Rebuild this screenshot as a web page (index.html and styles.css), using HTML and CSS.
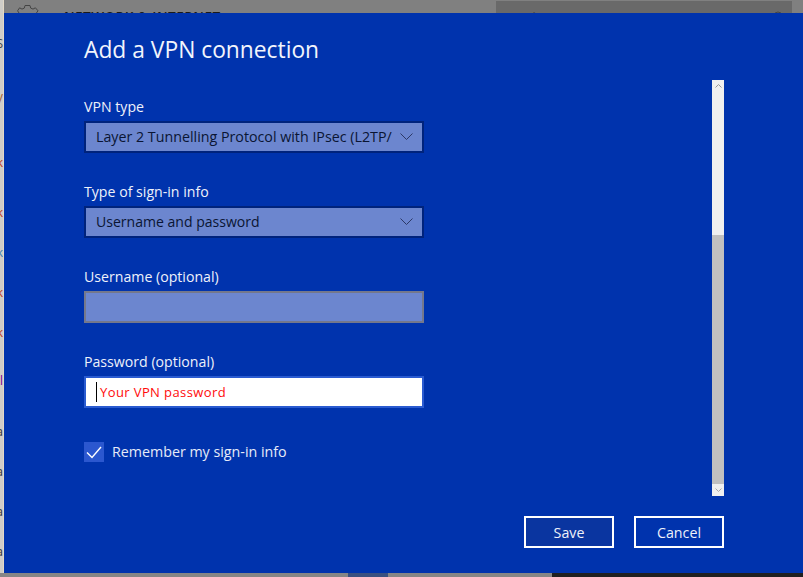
FILE: index.html
```html
<!DOCTYPE html>
<html lang="en">
<head>
<meta charset="utf-8">
<title>Add a VPN connection</title>
<link rel="stylesheet" href="styles.css">
</head>
<body>
<div class="backdrop">
  <div class="edge">
    <span class="frag frag-s">S</span>
    <span class="frag frag-v">V</span>
    <span class="frag frag-r1">k</span>
    <span class="frag frag-r2">k</span>
    <span class="frag frag-r3">k</span>
    <span class="frag frag-r4">k</span>
    <span class="frag frag-r5">k</span>
    <span class="frag frag-p">tl</span>
    <span class="frag frag-a1">a</span>
    <span class="frag frag-a">a</span>
    <span class="frag frag-a">a</span>
    <span class="frag frag-a">a</span>
  </div>
  <div class="settings-head">
    <svg class="gear" viewBox="0 0 22 22" width="22" height="22"><path d="M8 1.5h5l.7 2.6 2.3 1 2.4-1.3 2.6 3-1.6 2.2M8 1.5l-.7 2.6-2.3 1-2.4-1.3-2 3 1.4 2.2" fill="none" stroke="#444" stroke-width="1"/></svg>
    <span class="settings-title">NETWORK &amp; INTERNET</span>
  </div>
  <div class="search"><span>Find a setting</span><svg viewBox="0 0 12 12" width="12" height="12"><circle cx="6" cy="6" r="4" fill="none" stroke="#444" stroke-width="1"/></svg></div>
  <div class="taskbar"><i class="tb-a"></i><i class="tb-b"></i><i class="tb-c"></i><i class="tb-d"></i></div>
</div>

<main class="dialog">
  <h1 class="title">Add a VPN connection</h1>
  <div class="content">
    <form class="form">
      <div class="field">
        <div class="label">VPN type</div>
        <div class="control select"><span class="value">Layer 2 Tunnelling Protocol with IPsec (L2TP/</span>
          <svg class="chev" viewBox="0 0 13 7" width="13" height="7"><path d="M.5.5l6 6 6-6" fill="none" stroke="#2c3866" stroke-width="1"/></svg></div>
      </div>
      <div class="field">
        <div class="label">Type of sign-in info</div>
        <div class="control select"><span class="value narrow">Username and password</span>
          <svg class="chev" viewBox="0 0 13 7" width="13" height="7"><path d="M.5.5l6 6 6-6" fill="none" stroke="#2c3866" stroke-width="1"/></svg></div>
      </div>
      <div class="field">
        <div class="label">Username (optional)</div>
        <div class="control text"></div>
      </div>
      <div class="field">
        <div class="label">Password (optional)</div>
        <div class="control focus"><span class="caret"></span><span class="hint">Your VPN password</span></div>
      </div>
      <div class="check-row">
        <span class="checkbox"><svg viewBox="0 0 20 20" width="20" height="20"><path d="M3 10.5l5 5 9-10.5" fill="none" stroke="#fff" stroke-width="1.4"/></svg></span>
        <span class="check-label">Remember my sign-in info</span>
      </div>
    </form>
    <div class="scrollbar">
      <div class="sb-btn sb-up"><svg viewBox="0 0 7 4" width="7" height="4"><path d="M.5 3.5l3-3 3 3" fill="none" stroke="#999" stroke-width="1"/></svg></div>
      <div class="sb-track"></div>
      <div class="sb-thumb"></div>
      <div class="sb-btn"><svg viewBox="0 0 7 4" width="7" height="4"><path d="M.5.5l3 3 3-3" fill="none" stroke="#aaa" stroke-width="1"/></svg></div>
    </div>
  </div>
  <div class="actions">
    <button class="btn btn-save" type="button">Save</button>
    <button class="btn" type="button">Cancel</button>
  </div>
</main>
</body>
</html>
```
FILE: styles.css
```css
html, body {
  margin: 0;
  padding: 0;
  width: 803px;
  height: 577px;
  overflow: hidden;
  background: #808080;
  font-family: "Open Sans", "Noto Sans", sans-serif;
}
.backdrop {
  position: absolute;
  inset: 0;
  overflow: hidden;
}
.edge {
  position: absolute;
  left: 0;
  top: 0;
  width: 3px;
  height: 577px;
  background: #cfcdc8;
  border-right: 1px solid #e2d9c8;
  display: flex;
  flex-direction: column;
  overflow: hidden;
  font-size: 12px;
  line-height: 12px;
}
.frag {
  display: flex;
  justify-content: flex-end;
  height: 12px;
  flex: none;
  color: #c0401a;
}
.frag-s { margin-top: 38px; color: #444; }
.frag-v { margin-top: 43px; color: #a06030; }
.frag-r1 { margin-top: 52px; }
.frag-r2 { margin-top: 38px; }
.frag-r3 { margin-top: 28px; color: #4080b0; }
.frag-r4 { margin-top: 28px; }
.frag-r5 { margin-top: 28px; }
.frag-p { margin-top: 36px; color: #800090; }
.frag-a1 { margin-top: 39px; color: #333; }
.frag-a { margin-top: 28px; color: #333; }

.settings-head {
  position: absolute;
  left: 17px;
  top: 4px;
  display: flex;
  align-items: flex-start;
  gap: 25px;
}
.settings-title {
  font-size: 13.5px;
  line-height: 16px;
  margin-top: 5px;
  font-weight: 600;
  color: #1a1a1a;
  letter-spacing: .5px;
  white-space: nowrap;
}
.search {
  position: absolute;
  left: 496px;
  top: 1px;
  width: 276px;
  height: 24px;
  padding: 0 8px 0 12px;
  background: #696969;
  display: flex;
  justify-content: space-between;
  align-items: flex-start;
  color: #444;
  font-size: 14px;
  line-height: 18px;
}
.search span { margin-top: 8px; }
.search svg { margin-top: 9px; }
.taskbar {
  position: absolute;
  left: 0;
  right: 0;
  bottom: 0;
  height: 4px;
  display: flex;
}
.taskbar i { display: block; height: 4px; }
.tb-a { width: 348px; background: #868686; }
.tb-b { width: 40px; background: #3a5080; }
.tb-c { width: 164px; background: #868686; }
.tb-d { flex: 1; background: #202020; }

.dialog {
  position: absolute;
  left: 4px;
  top: 13px;
  width: 799px;
  height: 560px;
  box-sizing: border-box;
  padding: 0 79px 25px 80px;
  background: #0033ad;
  color: #fff;
  display: flex;
  flex-direction: column;
}
.title {
  margin: 0;
  padding-top: 20px;
  height: 47px;
  font-size: 22.8px;
  line-height: 34px;
  font-weight: 400;
  color: #f2f5fc;
  box-sizing: content-box;
}
.content {
  display: flex;
  justify-content: space-between;
  height: 416px;
}
.form {
  width: 340px;
  display: flex;
  flex-direction: column;
  gap: 29px;
  padding-top: 17px;
}
.field {
  display: flex;
  flex-direction: column;
  gap: 4px;
  height: 56px;
  flex: none;
}
.label {
  font-size: 14.15px;
  line-height: 20px;
  height: 20px;
  color: #eef1fa;
  white-space: nowrap;
}
.control {
  box-sizing: border-box;
  height: 32px;
  flex: none;
  border: 2px solid #00237c;
  background: #6c86cf;
  display: flex;
  align-items: center;
  font-size: 14.25px;
  color: #0a1533;
}
.select {
  justify-content: space-between;
  padding: 0 9px 2px 10px;
}
.value { white-space: nowrap; }
.narrow { font-size: 14.05px; }
.text { border-color: #74788c; }
.focus {
  border-color: #2a5bd0;
  background: #fff;
  padding-left: 10px;
}
.caret {
  width: 1px;
  height: 20px;
  background: #000;
  margin-right: 3px;
}
.hint {
  font-size: 13px;
  letter-spacing: .4px;
  color: #ff0a0a;
  white-space: nowrap;
}
.check-row {
  display: flex;
  align-items: center;
  gap: 8px;
  margin-top: 5px;
}
.checkbox {
  width: 20px;
  height: 20px;
  background: #2b57cf;
  display: block;
}
.checkbox svg { display: block; }
.check-label {
  font-size: 14.25px;
  line-height: 20px;
  color: #e6ebf8;
  white-space: nowrap;
}
.scrollbar {
  width: 12px;
  height: 416px;
  display: flex;
  flex-direction: column;
}
.sb-btn {
  height: 12px;
  flex: none;
  background: #f0f0f0;
  display: flex;
  align-items: center;
  justify-content: center;
}
.sb-track { height: 143px; flex: none; background: #f0f0f0; }
.sb-thumb { flex: 1; background: #c0c0c0; }
.actions {
  margin-top: 20px;
  display: flex;
  justify-content: flex-end;
  gap: 20px;
}
.btn {
  box-sizing: border-box;
  width: 90px;
  height: 32px;
  border: 2px solid #fff;
  background: #0033ad;
  color: #eef1fa;
  font: inherit;
  font-size: 14.25px;
  padding: 0;
}
.btn-save { background: #0a35a0; }
```
